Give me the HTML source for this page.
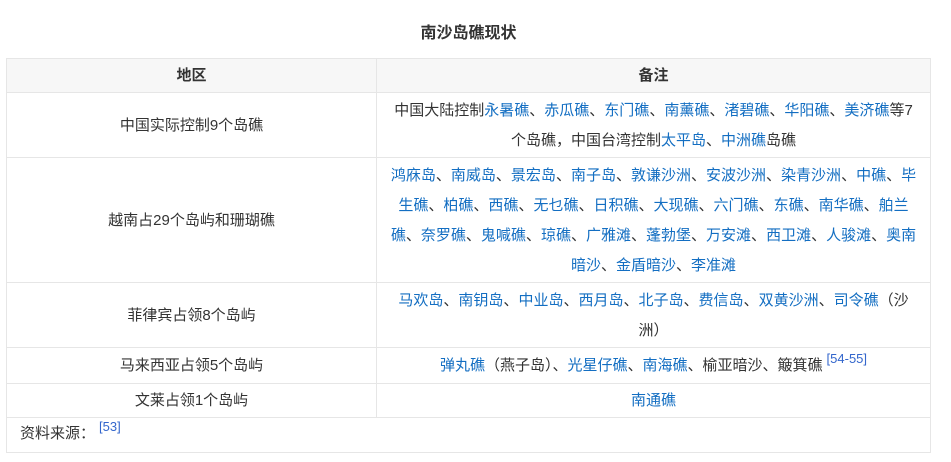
<!DOCTYPE html>
<html><head><meta charset="utf-8">
<style>
html,body{margin:0;padding:0;background:#fff;}
body{width:951px;height:462px;overflow:hidden;font-family:"Liberation Sans","Noto Sans CJK SC",sans-serif;color:#333;}
.t{position:absolute;left:0;top:22px;width:937px;text-align:center;font-weight:bold;font-size:16px;line-height:24px;color:#333;}
table{position:absolute;left:6px;top:58px;width:925px;border-collapse:collapse;font-size:15px;}
td,th{border:1px solid #e6e6e6;text-align:center;line-height:30px;padding:2px 12px 1px;vertical-align:middle;}
th{background:#f7f7f7;font-weight:bold;height:31px;padding:1px 12px;}
td.l{width:345px;}
a{color:#136ec2;text-decoration:none;}
sup{font-size:13px;vertical-align:7px;line-height:0;color:#3366cc;margin-left:4px;}
.src{text-align:left;padding:1px 13px 3px;height:28px;}
</style></head><body>
<div class="t">南沙岛礁现状</div>
<table>
<tr><th>地区</th><th>备注</th></tr>
<tr style="height:65px"><td class="l">中国实际控制9个岛礁</td><td>中国大陆控制<a>永暑礁</a>、<a>赤瓜礁</a>、<a>东门礁</a>、<a>南薰礁</a>、<a>渚碧礁</a>、<a>华阳礁</a>、<a>美济礁</a>等7个岛礁，中国台湾控制<a>太平岛</a>、<a>中洲礁</a>岛礁</td></tr>
<tr style="height:125px"><td class="l">越南占29个岛屿和珊瑚礁</td><td><a>鸿庥岛</a>、<a>南威岛</a>、<a>景宏岛</a>、<a>南子岛</a>、<a>敦谦沙洲</a>、<a>安波沙洲</a>、<a>染青沙洲</a>、<a>中礁</a>、<a>毕生礁</a>、<a>柏礁</a>、<a>西礁</a>、<a>无乜礁</a>、<a>日积礁</a>、<a>大现礁</a>、<a>六门礁</a>、<a>东礁</a>、<a>南华礁</a>、<a>舶兰礁</a>、<a>奈罗礁</a>、<a>鬼喊礁</a>、<a>琼礁</a>、<a>广雅滩</a>、<a>蓬勃堡</a>、<a>万安滩</a>、<a>西卫滩</a>、<a>人骏滩</a>、<a>奥南暗沙</a>、<a>金盾暗沙</a>、<a>李准滩</a></td></tr>
<tr style="height:65px"><td class="l">菲律宾占领8个岛屿</td><td><a>马欢岛</a>、<a>南钥岛</a>、<a>中业岛</a>、<a>西月岛</a>、<a>北子岛</a>、<a>费信岛</a>、<a>双黄沙洲</a>、<a>司令礁</a>（沙洲）</td></tr>
<tr style="height:36px"><td class="l">马来西亚占领5个岛屿</td><td><a>弹丸礁</a>（燕子岛）、<a>光星仔礁</a>、<a>南海礁</a>、榆亚暗沙、簸箕礁<sup>[54-55]</sup></td></tr>
<tr style="height:34px"><td class="l">文莱占领1个岛屿</td><td><a>南通礁</a></td></tr>
<tr><td colspan="2" class="src">资料来源：<sup>[53]</sup></td></tr>
</table>
</body></html>
